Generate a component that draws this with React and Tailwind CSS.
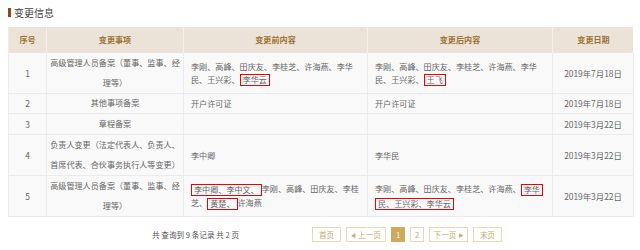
const cols = 'grid grid-cols-[38px_137px_184px_185px_81px]';

function Mark({ children }) {
  return (
    <span className="inline-block h-[12px] leading-[10px] border border-[#f00000] px-[2px] align-middle">
      {children}
    </span>
  );
}

function Cell({ children, className = '' }) {
  return (
    <div className={`border-r border-b border-[#ebebeb] flex items-center ${className}`}>
      {children}
    </div>
  );
}

const rows = [
  {
    no: '1',
    item: ['高级管理人员备案（董事、监事、经', '理等）'],
    before: [
      '李刚、高峰、田庆友、李桂芝、许海燕、李华',
      <>民、王兴彩、<Mark>李华云</Mark></>,
    ],
    after: [
      '李刚、高峰、田庆友、李桂芝、许海燕、李华',
      <>民、王兴彩、<Mark>王飞</Mark></>,
    ],
    date: '2019年7月18日',
    h: 'h-[40px]',
  },
  { no: '2', item: ['其他事项备案'], before: ['开户许可证'], after: ['开户许可证'], date: '2019年7月18日', h: 'h-[21px]' },
  { no: '3', item: ['章程备案'], before: [], after: [], date: '2019年3月22日', h: 'h-[21px]' },
  {
    no: '4',
    item: ['负责人变更（法定代表人、负责人、', '首席代表、合伙事务执行人等变更）'],
    before: ['李中卿'],
    after: ['李华民'],
    date: '2019年3月22日',
    h: 'h-[41px]',
  },
  {
    no: '5',
    item: ['高级管理人员备案（董事、监事、经', '理等）'],
    before: [
      <><Mark>李中卿、李中文、</Mark>李刚、高峰、田庆友、李桂</>,
      <>芝、<Mark>黄楚、</Mark>许海燕</>,
    ],
    after: [
      <>李刚、高峰、田庆友、李桂芝、许海燕、<Mark>李华</Mark></>,
      <><Mark>民、王兴彩、李华云</Mark></>,
    ],
    date: '2019年3月22日',
    h: 'h-[41px]',
  },
];

export default function App() {
  return (
    <div className="w-[640px] h-[250px] bg-white font-['Noto_Sans_CJK_SC',sans-serif] text-[8.1px] text-[#666] overflow-hidden">
      <div className="flex items-center h-[27px] pl-[8px] pb-[2px]">
        <div className="w-[3px] h-[9px] bg-[#8b4a1c]" />
        <span className="ml-[3px] text-[10px] text-[#444]">变更信息</span>
      </div>

      <div className="ml-[8px] w-[625px] border-l border-[#ebebeb] bg-[#f9f9f9]">
        <div className={`${cols} h-[26px] bg-[#ebe3d7] text-[#9c7130] font-bold`}>
          <div className="flex items-center justify-center border-r border-[#f5f0e8]">序号</div>
          <div className="flex items-center justify-center border-r border-[#f5f0e8]">变更事项</div>
          <div className="flex items-center justify-center border-r border-[#f5f0e8]">变更前内容</div>
          <div className="flex items-center justify-center border-r border-[#f5f0e8]">变更后内容</div>
          <div className="flex items-center justify-center">变更日期</div>
        </div>

        {rows.map((r) => (
          <div key={r.no} className={`${cols} ${r.h}`}>
            <Cell className="justify-center text-[8.5px]">{r.no}</Cell>
            <Cell className="justify-center">
              <div className="flex flex-col items-center leading-[20px] whitespace-nowrap">
                {r.item.map((l, i) => (
                  <span key={i}>{l}</span>
                ))}
              </div>
            </Cell>
            <Cell className="pl-[7px]">
              <div className="flex flex-col leading-[13px] whitespace-nowrap">
                {r.before.map((l, i) => (
                  <span key={i}>{l}</span>
                ))}
              </div>
            </Cell>
            <Cell className="pl-[7px]">
              <div className="flex flex-col leading-[13px] whitespace-nowrap">
                {r.after.map((l, i) => (
                  <span key={i}>{l}</span>
                ))}
              </div>
            </Cell>
            <Cell className="justify-center text-[8.4px]">{r.date}</Cell>
          </div>
        ))}
      </div>

      <div className="flex items-center mt-[10px] h-[15px] text-[7.6px]">
        <span className="ml-[152px] w-[160px] text-[#555]">共 查询到 9 条记录 共 2 页</span>
        <div className="flex items-center gap-[5px] text-[#c9a869]">
          <span className="w-[29px] h-[15px] flex items-center justify-center border border-[#ead8b4] bg-white">首页</span>
          <span className="w-[40px] h-[15px] flex items-center justify-center border border-[#ead8b4] bg-white">
            <span className="text-[5px] mr-[2px]">◀</span>上一页
          </span>
          <span className="w-[14px] h-[15px] flex items-center justify-center bg-[#cfa95c] text-white">1</span>
          <span className="w-[14px] h-[15px] flex items-center justify-center border border-[#ead8b4] bg-white">2</span>
          <span className="w-[39px] h-[15px] flex items-center justify-center border border-[#ead8b4] bg-white">
            下一页<span className="text-[5px] ml-[2px]">▶</span>
          </span>
          <span className="w-[29px] h-[15px] flex items-center justify-center border border-[#ead8b4] bg-white">末页</span>
        </div>
      </div>
    </div>
  );
}
